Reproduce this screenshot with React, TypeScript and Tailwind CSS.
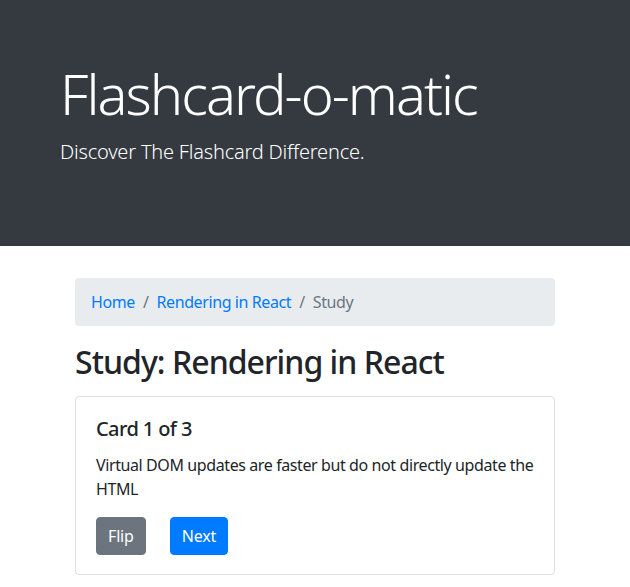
export default function App() {
  return (
    <div className="min-h-screen bg-white font-['Noto_Sans','Open_Sans',sans-serif] tracking-[-0.025em] text-[#212529]">
      {/* jumbotron */}
      <header className="mb-8 h-[246px] bg-[#343a40] pt-[60px] text-white">
        <div className="mx-auto w-[540px] px-[15px]">
          <h1 className="text-[56px] font-light leading-[1.2] tracking-[-0.035em]">Flashcard-o-matic</h1>
          <p className="mt-[10px] text-[20px] font-light leading-[1.5] tracking-[-0.01em]">
            Discover The Flashcard Difference.
          </p>
        </div>
      </header>

      <main className="mx-auto w-[540px] px-[15px]">
        <div className="px-[15px]">
          <nav className="mb-4 flex items-center rounded bg-[#e9ecef] px-4 py-3 text-base leading-6">
            <a href="#" className="text-[#007bff]">Home</a>
            <span className="px-2 text-[#6c757d]">/</span>
            <a href="#" className="text-[#007bff]">Rendering in React</a>
            <span className="px-2 text-[#6c757d]">/</span>
            <span className="text-[#6c757d]">Study</span>
          </nav>

          <h2 className="mb-4 pt-[2px] text-[32px] font-medium leading-[36px] tracking-[-0.03em]">
            Study: Rendering in React
          </h2>

          <div className="rounded border border-black/[0.125] px-5 pt-5 pb-[19px]">
            <h5 className="mb-3 text-[20px] font-medium leading-6 tracking-[-0.03em]">Card 1 of 3</h5>
            <p className="mb-4 text-base leading-6">
              Virtual DOM updates are faster but do not directly update the HTML
            </p>
            <div className="flex gap-6 tracking-[-0.01em]">
              <button className="rounded border border-[#6c757d] bg-[#6c757d] px-[11px] py-1.5 text-base leading-6 text-white">
                Flip
              </button>
              <button className="rounded border border-[#007bff] bg-[#007bff] px-[11px] py-1.5 text-base leading-6 text-white">
                Next
              </button>
            </div>
          </div>
        </div>
      </main>
    </div>
  );
}
